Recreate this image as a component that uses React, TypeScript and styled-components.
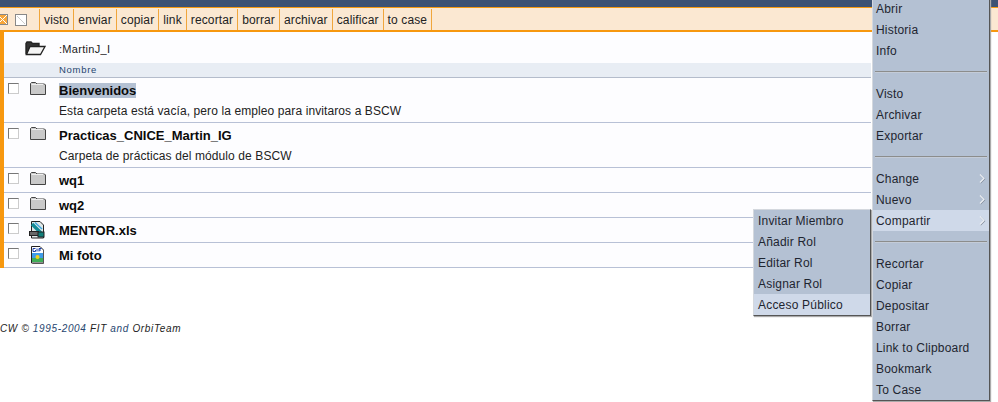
import styled, { createGlobalStyle } from 'styled-components';

const GlobalStyle = createGlobalStyle`
  html, body {
    margin: 0;
    padding: 0;
    background: #fff;
  }
`;

const Page = styled.div`
  position: relative;
  width: 998px;
  height: 402px;
  overflow: hidden;
  background: #fff;
  font-family: "Liberation Sans", Arial, sans-serif;
  color: #000;
`;

const TopBar = styled.div`
  height: 7px;
  background: #3c5274;
  border-bottom: 1px solid #f59a12;
`;

const Toolbar = styled.div`
  display: flex;
  align-items: center;
  height: 21px;
  background: #fbe8d2;
  border-bottom: 2px solid #f7980f;
  border-top: 1px solid #fbe8d2;
`;

const ToolIcons = styled.div`
  display: flex;
  align-items: center;
  gap: 7px;
  width: 39px;
  height: 100%;
`;

const ToolButton = styled.div`
  display: flex;
  align-items: center;
  height: 100%;
  padding: 0 4px;
  border-left: 1px solid #f0a63c;
  font-size: 12px;
  letter-spacing: 0.13px;
  color: #222;
  &:last-child {
    border-right: 1px solid #f0a63c;
  }
`;

const Content = styled.div`
  width: 871px;
  border-left: 4px solid #f7980f;
  box-sizing: border-box;
  background: #fdfdff;
`;

const PathRow = styled.div`
  display: flex;
  align-items: center;
  box-sizing: border-box;
  height: 31px;
  padding: 2px 0 0 21px;
  font-size: 11px;
  letter-spacing: 0.3px;
  color: #222;
`;

const PathLabel = styled.span`
  margin-left: 13px;
`;

const ColumnHead = styled.div`
  height: 14px;
  padding-left: 55px;
  line-height: 14px;
  font-size: 9.5px;
  letter-spacing: 0.7px;
  color: #27466f;
  background: #e8edf4;
  border-bottom: 1px solid #b4bccb;
`;

const Row = styled.div`
  display: grid;
  grid-template-columns: 4px 11px 10px 18px 12px 1fr;
  grid-template-areas: ". check . icon . text";
  padding-top: 3px;
  border-bottom: 1px solid #b8c1d6;
  min-height: 21px;
`;

const Check = styled.span`
  grid-area: check;
  display: block;
  box-sizing: border-box;
  width: 11px;
  height: 11px;
  margin-top: 2px;
  border: 1px solid;
  border-color: #777 #ccc #ccc #777;
  background: #fff;
`;

const IconCell = styled.div`
  grid-area: icon;
  height: 17px;
  line-height: 0;
`;

const TextCell = styled.div`
  grid-area: text;
  padding-top: 1px;
`;

const Name = styled.div`
  font-size: 13px;
  line-height: 18px;
  font-weight: 700;
  color: #0a0a0a;
`;

const Highlight = styled.span`
  background: #b4c1d3;
`;

const Description = styled.div`
  margin-top: 2px;
  padding-bottom: 2px;
  font-size: 12px;
  line-height: 18px;
  letter-spacing: 0.1px;
  color: #222;
`;

const Footer = styled.div`
  margin-top: 54px;
  font-size: 10px;
  line-height: 13px;
  font-style: italic;
  letter-spacing: 0.65px;
  color: #222;
`;

const FooterLink = styled.span`
  color: #27466f;
`;

const Menu = styled.div<{ $top: number; $left: number }>`
  position: absolute;
  top: ${(p) => p.$top}px;
  left: ${(p) => p.$left}px;
  width: 118px;
  box-sizing: border-box;
  background: #b4c1d3;
  border: 1px solid;
  border-color: #d4d8de #555 #555 #d4d8de;
  box-shadow: 1px 1px 1px #aaa;
`;

const MenuItem = styled.div<{ $active?: boolean; $inset?: number }>`
  position: relative;
  height: 21px;
  padding-left: ${(p) => p.$inset ?? 3}px;
  line-height: 23px;
  font-size: 12px;
  letter-spacing: 0.2px;
  color: #1e2530;
  background: ${(p) => (p.$active ? '#cfd9e9' : 'transparent')};
`;

const Arrow = styled.svg`
  position: absolute;
  top: 6px;
  right: 3px;
`;

const Separator = styled.div`
  height: 1px;
  margin: 10px 2px 11px 2px;
  background: #8c8d8c;
  box-shadow: 0 1px 0 #c4ccd8;
`;

const FolderIcon = () => (
  <svg width="18" height="15" viewBox="0 0 18 15">
    <path d="M1.5 13.5V2.5L2.5 1.5H6.5L8 3H15.5L16.5 4V13.5Z" fill="#c9c9c9" stroke="#444" strokeWidth="1" />
    <path d="M2.5 3.5H14.5" stroke="#eee" strokeWidth="1" />
  </svg>
);

const OpenFolderIcon = () => (
  <svg width="21" height="15" viewBox="0 0 21 15">
    <path d="M1 13.5V2.5L2 1H6L7.5 2.5H14V5" fill="#333" stroke="#222" strokeWidth="1.4" />
    <path d="M1.5 13.5L5 5.5H20L15.5 13.5Z" fill="#f4f4f4" stroke="#222" strokeWidth="1.3" />
  </svg>
);

const XlsIcon = () => (
  <svg width="16" height="18" viewBox="0 0 16 18">
    <path d="M2.5 0.5H11L14.5 4V17H2.5Z" fill="#dfe8e8" stroke="#222" />
    <path d="M3 3L12 12" stroke="#128a96" strokeWidth="3.4" />
    <path d="M6 1.5L13 8" stroke="#3aa6e0" strokeWidth="1.4" />
    <rect x="0.5" y="10.5" width="9" height="4" fill="#666" stroke="#222" />
    <rect x="9" y="11" width="6" height="5" fill="#0f7d78" stroke="#222" />
  </svg>
);

const GifIcon = () => (
  <svg width="16" height="18" viewBox="0 0 16 18">
    <path d="M2.5 0.5H11L14.5 4V17H2.5Z" fill="#fff" stroke="#222" />
    <path d="M14.5 4V17.5H3.5" fill="none" stroke="#555" strokeWidth="1" />
    <rect x="3" y="7" width="11" height="5" fill="#3f9be8" />
    <rect x="3" y="12" width="11" height="4" fill="#3fae58" />
    <circle cx="8.5" cy="11" r="2" fill="#f6d21a" />
    <path d="M6.5 2.5H4V5.5H6.5V4M8 2.5V5.5M10 5.5V2.5H12.5M10 4H12" fill="none" stroke="#1a3fa8" strokeWidth="1" />
  </svg>
);

const tools = ['visto', 'enviar', 'copiar', 'link', 'recortar', 'borrar', 'archivar', 'calificar', 'to case'];

const rows = [
  { name: 'Bienvenidos', mark: true, desc: 'Esta carpeta está vacía, pero la empleo para invitaros a BSCW', icon: <FolderIcon /> },
  { name: 'Practicas_CNICE_Martin_IG', desc: 'Carpeta de prácticas del módulo de BSCW', icon: <FolderIcon /> },
  { name: 'wq1', icon: <FolderIcon /> },
  { name: 'wq2', icon: <FolderIcon /> },
  { name: 'MENTOR.xls', icon: <XlsIcon /> },
  { name: 'Mi foto', icon: <GifIcon /> },
];

const mainMenu = [
  ['Abrir', 'Historia', 'Info'],
  ['Visto', 'Archivar', 'Exportar'],
  ['Change', 'Nuevo', 'Compartir'],
  ['Recortar', 'Copiar', 'Depositar', 'Borrar', 'Link to Clipboard', 'Bookmark', 'To Case'],
];

const subMenu = ['Invitar Miembro', 'Añadir Rol', 'Editar Rol', 'Asignar Rol', 'Acceso Público'];
const withArrow = ['Change', 'Nuevo', 'Compartir'];

export default function App() {
  return (
    <Page>
      <GlobalStyle />
      <TopBar />
      <Toolbar>
        <ToolIcons>
          <svg width="8" height="11" viewBox="0 0 8 11">
            <rect x="-3" y="0.5" width="10.5" height="10" fill="#f7a63a" stroke="#888" />
            <path d="M-2 1L7 10M7 1L-2 10" stroke="#fff" strokeWidth="1" />
          </svg>
          <svg width="12" height="12" viewBox="0 0 12 12">
            <rect x="0.5" y="0.5" width="11" height="11" fill="#fff" stroke="#888" />
            <path d="M2 2L10 10" stroke="#ccc" />
          </svg>
        </ToolIcons>
        {tools.map((t) => (
          <ToolButton key={t}>{t}</ToolButton>
        ))}
      </Toolbar>
      <Content>
        <PathRow>
          <OpenFolderIcon />
          <PathLabel>:MartinJ_I</PathLabel>
        </PathRow>
        <ColumnHead>Nombre</ColumnHead>
        {rows.map((r) => (
          <Row key={r.name}>
            <Check />
            <IconCell>{r.icon}</IconCell>
            <TextCell>
              <Name>{r.mark ? <Highlight>{r.name}</Highlight> : r.name}</Name>
              {r.desc && <Description>{r.desc}</Description>}
            </TextCell>
          </Row>
        ))}
      </Content>
      <Footer>
        CW © <FooterLink>1995-2004</FooterLink> FIT <FooterLink>and</FooterLink> OrbiTeam
      </Footer>
      <Menu $top={209} $left={753}>
        {subMenu.map((s) => (
          <MenuItem key={s} $inset={4} $active={s === 'Acceso Público'}>{s}</MenuItem>
        ))}
      </Menu>
      <Menu $top={-3} $left={872}>
        {mainMenu.map((group, i) => (
          <div key={i}>
            {i > 0 && <Separator />}
            {group.map((item) => (
              <MenuItem key={item} $active={item === 'Compartir'}>
                {item}
                {withArrow.includes(item) && (
                  <Arrow width="7" height="10" viewBox="0 0 7 10">
                    <path d="M1.5 1L5.5 5L1.5 9" fill="none" stroke="#7f8a9a" strokeWidth="1.2" />
                    <path d="M1 0.5L5 4.5L1 8.5" fill="none" stroke="#eef1f6" strokeWidth="1.2" />
                  </Arrow>
                )}
              </MenuItem>
            ))}
          </div>
        ))}
      </Menu>
    </Page>
  );
}
